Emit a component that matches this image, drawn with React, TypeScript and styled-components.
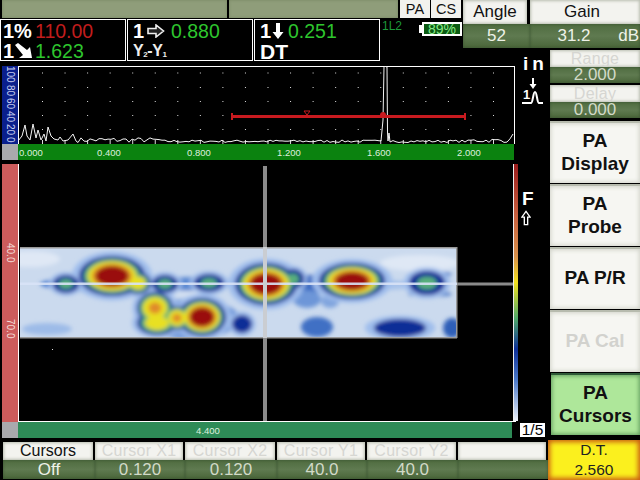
import React from "react";
import styled, { createGlobalStyle } from "styled-components";

const Global = createGlobalStyle`
  html, body { margin: 0; padding: 0; background: #000; }
  * { box-sizing: border-box; }
  body { font-family: "Liberation Sans", Arial, sans-serif; }
`;

const Page = styled.div`
  width: 640px; height: 480px; overflow: hidden; background: #000;
  display: grid;
  grid-template-columns: 463px 87px 90px;
  grid-template-rows: 48px 13px 379px 40px;
  grid-template-areas:
    "head params params"
    "head . side"
    "main main side"
    "bottom bottom dt";
`;

const Head = styled.div`grid-area: head; display: flex; flex-direction: column;`;
const TitleRow = styled.div`display: flex; height: 18px; padding-left: 2px; gap: 1px;`;
const Strip = styled.div<{ $w: number }>`
  width: ${p => p.$w}px; height: 18px;
  background: #8f9d7a;
  box-shadow: inset 0 0 3px #75855f;
  margin-right: 1px;
`;
const Tab = styled.div`
  width: 30px; height: 18px; background: #f2f2ee; color: #111;
  font-size: 14.500px; line-height: 18px; text-align: center;
`;
const InfoRow = styled.div`display: flex; margin-top: 1px; height: 42px;`;
const Readout = styled.div<{ $pad: number }>`
  width: 126px; height: 42px; margin-right: 1px; border: 1px solid #fff; background: #000;
  display: grid; grid-template-rows: 21px 20px; padding-left: ${p => p.$pad}px;
`;
const ReadRow = styled.div`
  display: flex; align-items: center; height: 20px; white-space: nowrap;
  &:first-child { height: 21px; padding-top: 1px; }
`;
const Tag = styled.span<{ $w?: number }>`
  font-weight: 700; color: #fff; font-size: 20px; line-height: 20px;
  display: inline-flex; align-items: center; width: ${p => (p.$w ? p.$w + "px" : "auto")};
`;
const DtTag = styled(Tag)`font-size: 21px; margin-top: 1px;`;
const SmallTag = styled.span`font-weight: 700; color: #eee; font-size: 16px; line-height: 20px; letter-spacing: -0.4px;
  sub { font-size: 8px; vertical-align: -1px; line-height: 0; }`;
const Num = styled.span<{ $red?: boolean }>`
  font-size: 19.500px; line-height: 20px; color: ${p => (p.$red ? "#c11d1d" : "#2ec52e")};
`;
const StatusCell = styled.div`flex: 1; display: flex; justify-content: space-between; padding: 0 1px 0 1px;`;
const L2 = styled.span`color: #1d9a3a; font-size: 12px; line-height: 12px; margin-top: 1px;`;
const Battery = styled.div`
  width: 40px; height: 14px; margin-top: 3px; border: 2px solid #fff; background: #0b5a12;
  color: #86e886; font-size: 14px; line-height: 11px; text-align: center; position: relative;
  &::before { content: ""; position: absolute; left: -5px; top: 1px; width: 3px; height: 8px; background: #fff; }
`;

const Bevel = styled.div<{ $off?: boolean; $h: number; $shift?: number }>`
  height: ${p => p.$h}px; background: #f3f3ef;
  box-shadow: inset 0 0 3px 1px #b9bdb0;
  color: ${p => (p.$off ? "#d6d6d2" : "#111")};
  text-align: center; white-space: nowrap; overflow: hidden;
  font-size: ${p => (p.$h > 20 ? 17 : 16)}px; line-height: ${p => p.$h}px;
  letter-spacing: ${p => (p.$off ? "0.3px" : "0")};
  padding-right: ${p => p.$shift ?? 0}px;
`;
const Value = styled.div<{ $off?: boolean; $h: number; $shift?: number }>`
  height: ${p => p.$h}px; background: linear-gradient(#4f6c40, #5f7a50 50%, #496539);
  box-shadow: inset 0 0 3px #3a5230;
  color: ${p => (p.$off ? "#d2dac8" : "#eef2e8")};
  text-align: center; white-space: nowrap; font-size: 17px; line-height: ${p => p.$h}px; position: relative;
  padding-right: ${p => p.$shift ?? 0}px;
`;
const Unit = styled.span`position: absolute; right: 1px; top: 0;`;

const Params = styled.div`grid-area: params; display: flex;`;
const Param = styled.div<{ $w: number }>`
  width: ${p => p.$w}px; display: flex; flex-direction: column;
`;
const AngleLabel = styled(Bevel)`margin-right: 3px;`;

const Side = styled.div`grid-area: side; display: flex; flex-direction: column; margin-top: 2px;`;
const SmallParam = styled.div`display: flex; flex-direction: column; margin-bottom: 2px;`;
const MenuStack = styled.div`display: flex; flex-direction: column; margin-top: 1px; gap: 1px;`;
const MenuBtn = styled.div<{ $off?: boolean; $on?: boolean }>`
  height: 62px; display: flex; align-items: center; justify-content: center; text-align: center;
  font-weight: 700; font-size: 19px; line-height: 23.500px; padding-bottom: 2px;
  color: ${p => (p.$off ? "#d2d2ce" : "#111")};
  background: ${p => (p.$on ? "#aee79a" : "#f6f6f2")};
  border-top: 2px solid ${p => (p.$on ? "#2f5a38" : "#b7bbae")};
  box-shadow: inset 0 0 4px 1px ${p => (p.$on ? "#5f9a5c" : "#d0d2c8")};
  margin-left: ${p => (p.$on ? "1px" : "0")};
`;
const Dt = styled.div`
  grid-area: dt; margin-left: -2px; background: #fbf01e;
  box-shadow: inset 0 0 5px 2px #c85a12;
  color: #222; text-align: center; font-size: 15.500px; line-height: 20px;
`;

const Main = styled.div`grid-area: main; display: flex; padding: 5px 0 0 2px;`;
const Scopes = styled.div`width: 516px; display: flex; flex-direction: column;`;
const PlotRow = styled.div`display: flex;`;
const VScale = styled.div<{ $bg: string; $h: number }>`
  width: 16px; height: ${p => p.$h}px; background: ${p => p.$bg};
  writing-mode: vertical-rl; font-size: 10px; line-height: 15px; color: #c8d0f0;
`;
const AScaleIn = styled.div`display: flex; justify-content: space-between; height: 100%; padding: 0 0 1px;`;
const BScaleIn = styled.div`padding-top: 79px; height: 100%; display: flex; gap: 57px; color: #f3dcd8; font-size: 10px;`;
const Plot = styled.svg`display: block;`;
const AxisRow = styled.div`display: flex; height: 16px;`;
const Corner = styled.div`width: 16px; background: #a9a9ad;`;
const Axis = styled.div<{ $bg: string; $w: number }>`
  width: ${p => p.$w}px; background: ${p => p.$bg}; color: #dff0df; font-size: 9.500px; line-height: 17px;
  display: flex;
`;
const AxisLabel = styled.span<{ $w: number; $first?: boolean }>`
  width: ${p => p.$w}px; text-align: ${p => (p.$first ? "left" : "center")}; padding-left: ${p => (p.$first ? "1px" : "0")};
`;
const Indicators = styled.div`width: 32px; display: flex; flex-direction: column; align-items: flex-start; padding-left: 3px;`;
const Units = styled.div`font-weight: 700; font-size: 19px; line-height: 20px; color: #fff; letter-spacing: 4px; margin: -12px 0 0 2px;`;
const F = styled.div`font-weight: 700; font-size: 19px; line-height: 20px; color: #fff; margin: 83px 0 0 1px;`;
const Page15 = styled.div`
  margin-top: 196px; margin-left: -1px; width: 25px; height: 14px; background: #fff; color: #000; font-size: 15.500px; line-height: 14px; text-align: center;
`;
const BScanGap = styled.div`height: 4px;`;

const Bottom = styled.div`grid-area: bottom; display: flex; padding: 2px 0 1px 3px;`;
const Cell = styled.div<{ $w: number }>`width: ${p => p.$w}px; display: flex; flex-direction: column;`;
const CellLabel = styled(Bevel)`margin-right: 2px;`;

/* ---------- drawings ---------- */
const ArrowRight = () => (
  <svg width="18" height="14" viewBox="0 0 18 14" style={{ marginLeft: 3 }}>
    <path d="M1 4.500h8V1l7.500 6L9 13V9.500H1z" fill="#222" stroke="#eee" strokeWidth="1.600" />
  </svg>
);
const ArrowDown = () => (
  <svg width="12" height="18" viewBox="0 0 12 18" style={{ marginLeft: 1 }}>
    <path d="M4 1h4v9h3.500L6 17 .5 10H4z" fill="#fff" />
  </svg>
);
const ArrowDiag = () => (
  <svg width="18" height="16" viewBox="0 0 18 16" style={{ marginLeft: 1 }}>
    <path d="M0 2 3 0l9 7 3-3 2 11H4l4-3z" fill="#fff" />
  </svg>
);
const UpArrow = () => (
  <svg width="10" height="18" viewBox="0 0 12 18" style={{ marginLeft: 0 }}>
    <path d="M6 1 11 8H8v9H4V8H1z" fill="#000" stroke="#fff" strokeWidth="1.600" />
  </svg>
);
const PeakIcon = () => (
  <svg width="24" height="28" viewBox="0 0 24 28" style={{ marginTop: 4 }}>
    <path d="M12 0v7" stroke="#fff" strokeWidth="2" />
    <path d="M8.500 6h7L12 11z" fill="#fff" />
    <text x="2" y="21" fontFamily="Liberation Sans" fontWeight="700" fontSize="13" fill="#fff">1</text>
    <path d="M1 25h9c2 0 2-11 4-11s2 11 4 11h4" fill="none" stroke="#fff" strokeWidth="2" />
  </svg>
);

const peaks: [number, number][] = [
  [0, 141], [4, 136], [7, 125], [9, 136], [12, 140], [15, 124], [18, 138], [20, 130], [23, 140], [26, 134], [28, 141],
  [30, 127], [33, 136], [36, 139], [40, 140], [42, 137], [45, 141], [50, 140], [55, 134], [58, 141],
];
function trace(): string {
  const pts: [number, number][] = peaks.map(([x, y]) => [x + 18, y]);
  let s = 7;
  const rnd = () => { s = (s * 16807) % 2147483647; return s / 2147483647; };
  for (let x = 78; x < 378; x += 3) {
    const amp = x < 160 ? 5 : 2.500;
    pts.push([x, 142.500 - rnd() * amp]);
  }
  pts.push([381, 141], [383, 120], [384, 67], [384.500, 66], [387, 67], [387.500, 132], [388, 141], [389, 133], [390, 142]);
  for (let x = 393; x < 512; x += 3) pts.push([x, 142.500 - rnd() * (x > 470 ? 4 : 2.500)]);
  pts.push([513, 134]);
  return "M" + pts.map(([x, y]) => `${(x - 18).toFixed(1)} ${(y - 66).toFixed(1)}`).join("L");
}

const dotXs = Array.from({ length: 21 }, (_, i) => 24 + i * 22.550);
const dotYs = [6.500, 21, 35, 49, 63];

const AScope = () => (
  <Plot width="498" height="78" viewBox="0 0 498 78">
    <rect x="0.500" y="0.500" width="496" height="78" fill="#000" stroke="#fff" />
    {dotXs.map(x => dotYs.map(y => <rect key={`${x}-${y}`} x={x} y={y} width="1" height="1" fill="#ddd" />))}
    {dotXs.map(x => <rect key={x} x={x} y="74" width="1" height="4" fill="#ddd" />)}
    <path d={trace()} fill="none" stroke="#f4f4f4" strokeWidth="1" />
    <rect x="213" y="49" width="235" height="3" fill="#c81a1f" />
    <rect x="213" y="47" width="2" height="7" fill="#c81a1f" />
    <rect x="446" y="47" width="2" height="7" fill="#c81a1f" />
    <path d="M286 45h6l-3 4z" fill="none" stroke="#c81a1f" />
    <circle cx="365" cy="49" r="3" fill="#c81a1f" />
  </Plot>
);

type Blob = { x: number; y: number; rx: number; ry: number; lv: 0 | 1 | 2 | 25 | 3 };
const blobs: Blob[] = [
  { x: 112, y: 275, rx: 33, ry: 20, lv: 3 },
  { x: 138, y: 282, rx: 13, ry: 11, lv: 2 },
  { x: 66, y: 283, rx: 13, ry: 9, lv: 1 },
  { x: 165, y: 283, rx: 13, ry: 9, lv: 1 },
  { x: 209, y: 282, rx: 15, ry: 9, lv: 1 },
  { x: 266, y: 283, rx: 31, ry: 21, lv: 3 },
  { x: 293, y: 278, rx: 11, ry: 10, lv: 1 },
  { x: 352, y: 280, rx: 33, ry: 18, lv: 3 },
  { x: 427, y: 282, rx: 18, ry: 12, lv: 1 },
  { x: 155, y: 307, rx: 18, ry: 16, lv: 25 },
  { x: 157, y: 322, rx: 20, ry: 12, lv: 2 },
  { x: 177, y: 317, rx: 13, ry: 12, lv: 25 },
  { x: 202, y: 316, rx: 24, ry: 19, lv: 3 },
  { x: 242, y: 323, rx: 10, ry: 9, lv: 0 },
  { x: 400, y: 327, rx: 26, ry: 9, lv: 0 },
];
const soft: [number, number, number, number, string][] = [
  [150, 290, 70, 4, "#dbe6f4"], [30, 258, 30, 8, "#dfe8f5"], [420, 262, 40, 8, "#dfe8f5"],
  [110, 283, 70, 8, "#4f7fd0"], [190, 283, 40, 7, "#5a88d2"], [310, 283, 40, 9, "#3466c0"], [385, 284, 30, 5, "#a7c2ea"],
  [317, 326, 16, 10, "#3f6fc4"], [452, 327, 9, 10, "#2f5fb8"], [307, 298, 14, 9, "#6d96d8"], [330, 300, 9, 7, "#80a4de"],
  [47, 328, 25, 6, "#9dbbe8"], [430, 273, 22, 3, "#4f7cc8"], [430, 293, 22, 3, "#4f7cc8"],
  [190, 318, 50, 20, "#6f97da"],
];
const layers: { c: string; f: Partial<Record<Blob["lv"], number>> }[] = [
  { c: "#9fbdec", f: { 0: 1.35, 1: 1.3, 2: 1.25, 25: 1.25, 3: 1.22 } },
  { c: "#0d2f97", f: { 0: 1, 1: 1, 2: 1, 25: 1, 3: 1 } },
  { c: "#58b07c", f: { 1: 0.55, 2: 0.8, 25: 0.85, 3: 0.85 } },
  { c: "#e8e020", f: { 2: 0.6, 25: 0.68, 3: 0.74 } },
  { c: "#e08a2a", f: { 25: 0.36, 3: 0.6 } },
  { c: "#9a0c10", f: { 3: 0.5 } },
];

const BScope = () => {
  const ox = 18, oy = 163;
  return (
    <Plot width="500" height="258" viewBox="0 0 500 258">
      <defs>
        <filter id="soft" x="-10%" y="-10%" width="120%" height="120%"><feGaussianBlur stdDeviation="2" /></filter>
        <clipPath id="hm"><rect x="2" y="83" width="437" height="91" /></clipPath>
        <linearGradient id="pal" x1="0" y1="0" x2="0" y2="1">
          <stop offset="0" stopColor="#9a1c1c" />
          <stop offset="0.2" stopColor="#c8603f" />
          <stop offset="0.36" stopColor="#d8904a" />
          <stop offset="0.46" stopColor="#f2e020" />
          <stop offset="0.6" stopColor="#4fa868" />
          <stop offset="0.72" stopColor="#0d2f97" />
          <stop offset="0.84" stopColor="#4a78c8" />
          <stop offset="1" stopColor="#eef2fa" />
        </linearGradient>
      </defs>
      <rect x="0" y="0" width="1" height="258" fill="#fff" />
      <rect x="0" y="257" width="498" height="1" fill="#fff" />
      <rect x="495" y="0" width="1" height="257" fill="#eee" />
      <rect x="496" y="0" width="4" height="257" fill="url(#pal)" />
      <g clipPath="url(#hm)">
        <rect x="2" y="83" width="437" height="91" fill="#cbdaee" />
        <g filter="url(#soft)">
          {soft.map(([x, y, rx, ry, c], i) => <ellipse key={i} cx={x - ox} cy={y - oy} rx={rx} ry={ry} fill={c} />)}
          {layers.map(l => blobs.map((b, i) => {
            const f = l.f[b.lv];
            if (!f) return null;
            return <ellipse key={`${l.c}${i}`} cx={b.x - ox} cy={b.y - oy} rx={b.rx * f} ry={b.ry * f} fill={l.c} />;
          }))}
        </g>
      </g>
      <rect x="2" y="83" width="437" height="1.500" fill="#999" />
      <rect x="2" y="173" width="437" height="1.500" fill="#999" />
      <rect x="438" y="83" width="1.500" height="91" fill="#999" />
      <rect x="2" y="118.500" width="437" height="2.500" fill="#d8e2f6" opacity="0.9" />
      <rect x="439" y="118.500" width="56" height="3" fill="#8a8a8a" />
      <rect x="245" y="2" width="4" height="255" fill="#8c8c8c" />
      <rect x="245" y="83" width="4" height="91" fill="#e4e8ef" opacity="0.7" />
      <rect x="34" y="185" width="1" height="1" fill="#ddd" />
    </Plot>
  );
};

const Small = ({ label, value }: { label: string; value: string }) => (
  <SmallParam>
    <Bevel $off $h={17}>{label}</Bevel>
    <Value $off $h={16}>{value}</Value>
  </SmallParam>
);

const cells: { l: string; v: string; w: number; off?: boolean }[] = [
  { l: "Cursors", v: "Off", w: 92 },
  { l: "Cursor X1", v: "0.120", w: 90, off: true },
  { l: "Cursor X2", v: "0.120", w: 92, off: true },
  { l: "Cursor Y1", v: "40.0", w: 90, off: true },
  { l: "Cursor Y2", v: "40.0", w: 91, off: true },
  { l: "", v: "", w: 90 },
];

export default function App() {
  return (
    <Page>
      <Global />
      <Head>
        <TitleRow>
          <Strip $w={225} />
          <Strip $w={169} />
          <Tab>PA</Tab>
          <Tab>CS</Tab>
        </TitleRow>
        <InfoRow>
          <Readout $pad={2}>
            <ReadRow><Tag $w={32}>1%</Tag><Num $red>110.00</Num></ReadRow>
            <ReadRow><Tag $w={32}>1<ArrowDiag /></Tag><Num>1.623</Num></ReadRow>
          </Readout>
          <Readout $pad={5}>
            <ReadRow><Tag $w={38}>1<ArrowRight /></Tag><Num>0.880</Num></ReadRow>
            <ReadRow><SmallTag>Y<sub>2</sub>-Y<sub>1</sub></SmallTag></ReadRow>
          </Readout>
          <Readout $pad={5}>
            <ReadRow><Tag $w={28}>1<ArrowDown /></Tag><Num>0.251</Num></ReadRow>
            <ReadRow><DtTag>DT</DtTag></ReadRow>
          </Readout>
          <StatusCell>
            <L2>1L2</L2>
            <Battery>89%</Battery>
          </StatusCell>
        </InfoRow>
      </Head>

      <Params>
        <Param $w={67}>
          <AngleLabel $h={24}>Angle</AngleLabel>
          <Value $h={24}>52</Value>
        </Param>
        <Param $w={110}>
          <Bevel $h={24} $shift={6}>Gain</Bevel>
          <Value $h={24} $shift={22}>31.2<Unit>dB</Unit></Value>
        </Param>
      </Params>

      <Side>
        <Small label="Range" value="2.000" />
        <Small label="Delay" value="0.000" />
        <MenuStack>
          <MenuBtn>PA<br />Display</MenuBtn>
          <MenuBtn>PA<br />Probe</MenuBtn>
          <MenuBtn>PA P/R</MenuBtn>
          <MenuBtn $off>PA Cal</MenuBtn>
          <MenuBtn $on>PA<br />Cursors</MenuBtn>
        </MenuStack>
      </Side>

      <Main>
        <Scopes>
          <PlotRow>
            <VScale $bg="#0a1f8c" $h={78}>
              <AScaleIn><span>100</span><span>80</span><span>60</span><span>40</span><span>20</span><span>0</span></AScaleIn>
            </VScale>
            <AScope />
          </PlotRow>
          <AxisRow>
            <Corner />
            <Axis $bg="#0b820f" $w={496}>
              <AxisLabel $w={46} $first>0.000</AxisLabel>
              <AxisLabel $w={90}>0.400</AxisLabel>
              <AxisLabel $w={90}>0.800</AxisLabel>
              <AxisLabel $w={90}>1.200</AxisLabel>
              <AxisLabel $w={90}>1.600</AxisLabel>
              <AxisLabel $w={90}>2.000</AxisLabel>
            </Axis>
          </AxisRow>
          <BScanGap />
          <PlotRow>
            <VScale $bg="#cc5c5c" $h={258}>
              <BScaleIn><span>40.0</span><span>70.0</span></BScaleIn>
            </VScale>
            <BScope />
          </PlotRow>
          <AxisRow>
            <Corner />
            <Axis $bg="#2e8b57" $w={494}><AxisLabel $w={380}>4.400</AxisLabel></Axis>
          </AxisRow>
        </Scopes>
        <Indicators>
          <Units>in</Units>
          <PeakIcon />
          <F>F</F>
          <UpArrow />
          <Page15>1/5</Page15>
        </Indicators>
      </Main>

      <Bottom>
        {cells.map((c, i) => (
          <Cell key={i} $w={c.w}>
            <CellLabel $off={c.off} $h={18}>{c.l}</CellLabel>
            <Value $off={c.off} $h={19}>{c.v}</Value>
          </Cell>
        ))}
      </Bottom>

      <Dt>D.T.<br />2.560</Dt>
    </Page>
  );
}
